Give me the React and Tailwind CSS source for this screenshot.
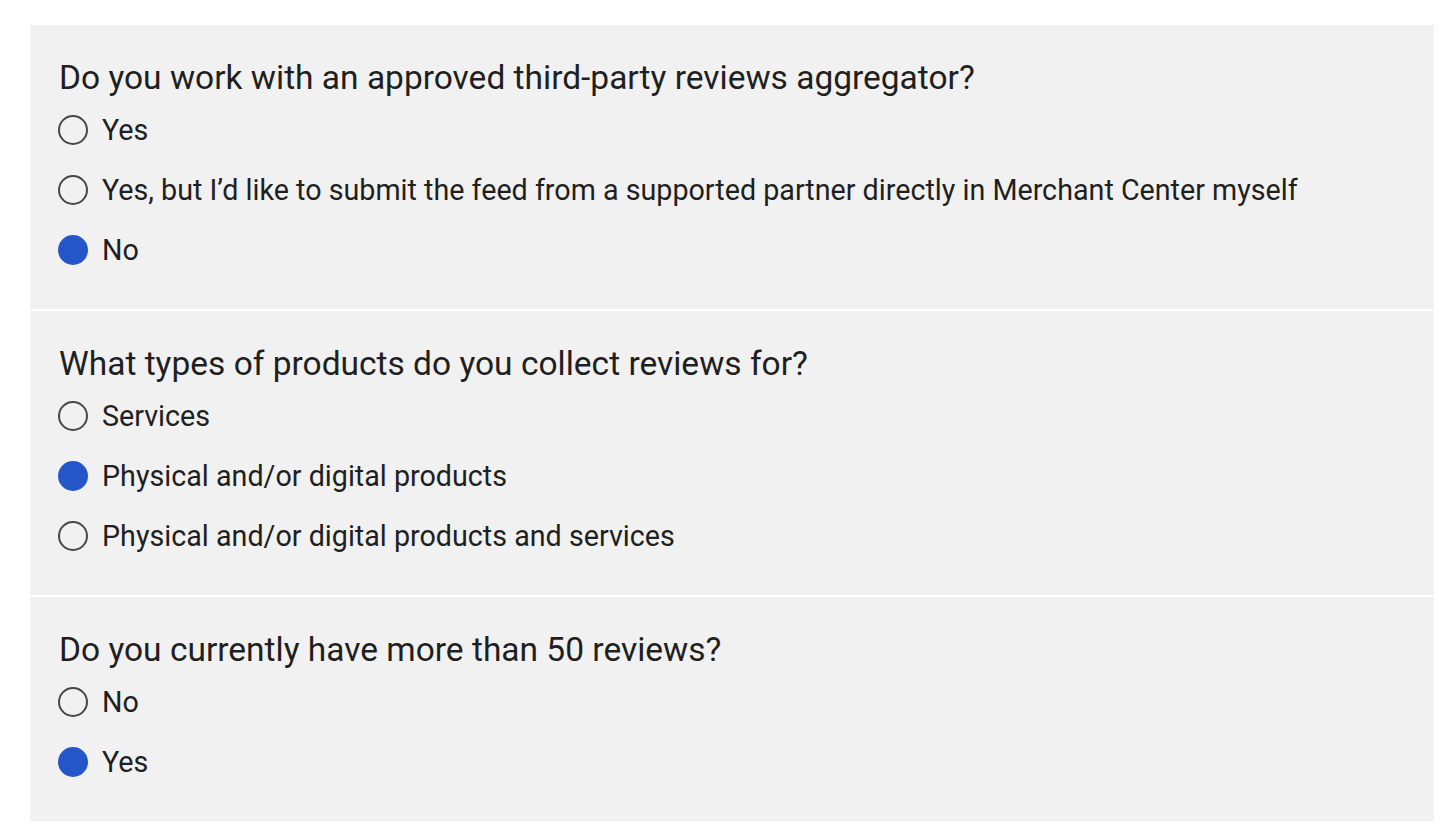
import React, { useState } from "react";

const questions = [
  {
    id: "aggregator",
    title: "Do you work with an approved third-party reviews aggregator?",
    options: [
      "Yes",
      "Yes, but I\u2019d like to submit the feed from a supported partner directly in Merchant Center myself",
      "No",
    ],
    selected: 2,
  },
  {
    id: "types",
    title: "What types of products do you collect reviews for?",
    options: [
      "Services",
      "Physical and/or digital products",
      "Physical and/or digital products and services",
    ],
    selected: 1,
  },
  {
    id: "count",
    title: "Do you currently have more than 50 reviews?",
    options: ["No", "Yes"],
    selected: 1,
  },
];

const Radio = ({ checked }) =>
  checked ? (
    <span className="w-[30px] h-[30px] rounded-full bg-[#2456c9] shrink-0" />
  ) : (
    <span className="w-[30px] h-[30px] rounded-full border-2 border-[#474747] shrink-0" />
  );

const Question = ({ q }) => {
  const [value, setValue] = useState(q.selected);

  return (
    <div className="bg-[#f1f1f1] pl-[28px] pr-6 pt-[35px] pb-[29px]">
      <h2 className="text-[33.5px] leading-[36px] text-[#1f1f1f] mb-1 pl-px">{q.title}</h2>
      {q.options.map((opt, i) => (
        <label
          key={opt}
          className="flex items-center h-[60px] gap-[14px] cursor-pointer"
          onClick={() => setValue(i)}
        >
          <Radio checked={value === i} />
          <span className="text-[28.7px] leading-[36px] text-[#1f1f1f]">{opt}</span>
        </label>
      ))}
    </div>
  );
};

export default function App() {
  return (
    <div
      className="min-h-screen bg-white pt-[25px] pl-[30px] pr-[12px]"
      style={{ fontFamily: "Roboto, 'Noto Sans', sans-serif" }}
    >
      <div className="flex flex-col gap-[2px]">
        {questions.map((q) => (
          <Question key={q.id} q={q} />
        ))}
      </div>
    </div>
  );
}
